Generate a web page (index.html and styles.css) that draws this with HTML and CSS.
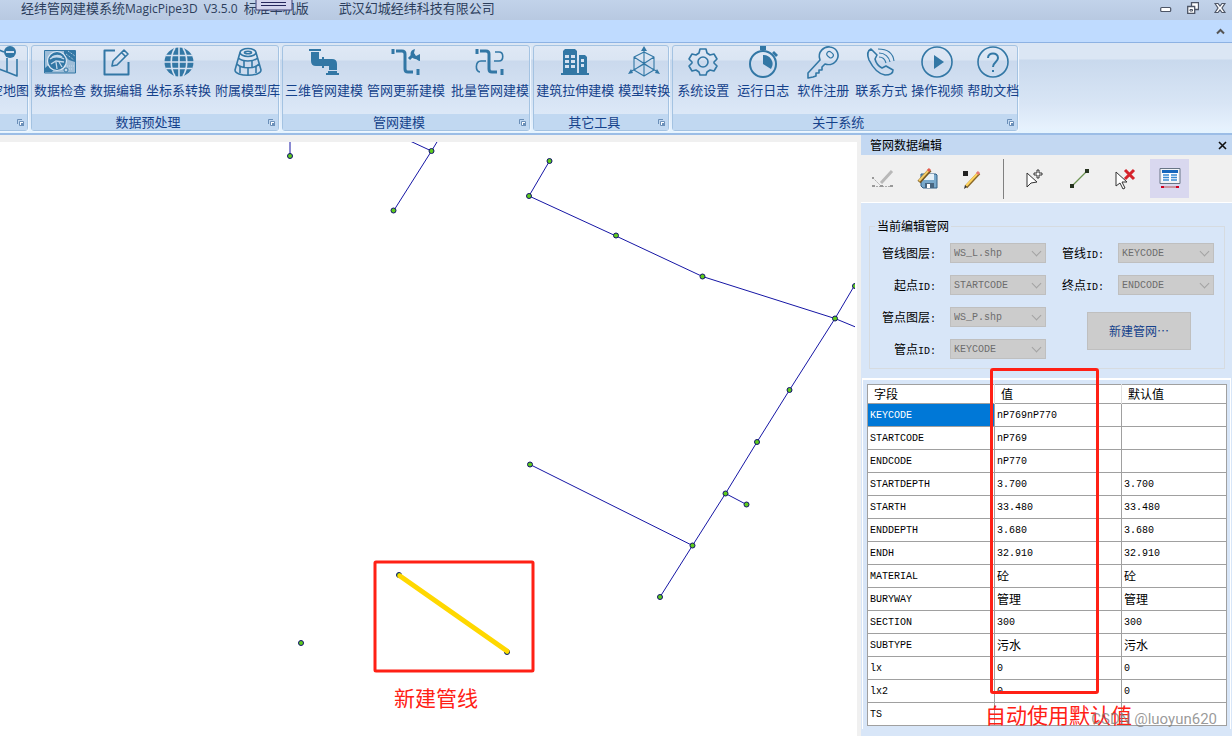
FILE: index.html
```html
<!DOCTYPE html>
<html lang="zh-CN">
<head>
<meta charset="utf-8">
<title>经纬管网建模系统MagicPipe3D</title>
<link rel="stylesheet" href="styles.css">
</head>
<body>
<header class="titlebar">
  <h1 class="title"><span>经纬管网建模系统<span class="latin">MagicPipe3D</span></span><span class="latin">V3.5.0</span><span>标准单机版</span></h1>
  <span class="company">武汉幻城经纬科技有限公司</span>
  <svg class="tab-handle" width="38" height="12" viewBox="0 0 38 12"><path d="M1 -2v12h36v-12" fill="#d4d4ee" stroke="#3c3c70"/><path d="M6 2.500h25M6 5.500h25" stroke="#26265c"/></svg>
  <div class="window-buttons">
    <button aria-label="最小化"><svg width="12" height="12" viewBox="0 0 12 12"><rect x=".7" y="5.500" width="10" height="4" rx="1" fill="#fff" stroke="#4d5566" stroke-width="1.200"/></svg></button>
    <button aria-label="还原"><svg width="12" height="12" viewBox="0 0 12 12"><path d="M4.500.7h7v6.800h-7z" fill="#fff" stroke="#4d5566" stroke-width="1.300"/><path d="M.7 4.500h7v6.800h-7z" fill="#fff" stroke="#4d5566" stroke-width="1.300"/><path d="M3 7.500h2.500v1.500H3z" stroke="#4d5566"/></svg></button>
    <button aria-label="关闭"><svg width="12" height="12" viewBox="0 0 12 12"><path d="M1 1.500h3l2 2.500 2-2.500h3L8 6l3 4.500H8L6 8l-2 2.500H1L4 6z" fill="#fff" stroke="#4d5566" stroke-width="1.200"/></svg></button>
  </div>
</header>
<div class="tabstrip"><button aria-label="折叠功能区"><svg width="9" height="7" viewBox="0 0 9 7"><path d="M1 5.500l3.500-3.500L8 5.500" fill="none" stroke="#555" stroke-width="2"/></svg></button></div>

<nav class="ribbon">
  <section class="group group-cut">
    <div class="tools">
      <button><svg viewBox="0 0 32 32"><path d="M4 7l8-3 5 2M4 7v20l8-4 8 3 10 4V13M20 12v14" class="ln"/><circle cx="23" cy="6" r="6" class="fl"/><path d="M19 6h8" stroke="#d5e1f1" stroke-width="2"/></svg>清空地图</button>
    </div>
    <footer><span></span><svg class="launch" viewBox="0 0 9 9"><path d="M1.500 6V1.500H6" fill="none" stroke="#6b8fb8"/><path d="M3.500 3.500h4v4h-4z" fill="#fff" stroke="#6b8fb8"/><path d="M5 5h3v3H5z" fill="#6b8fb8"/></svg></footer>
  </section>
  <section class="group">
    <div class="tools">
      <button><svg viewBox="0 0 32 32"><path d="M.5 4.500h31v22.500H.5z" fill="#9dbdd8" stroke="#3277a5"/><path d="M20 5h11v11l-6-2-5-5zM1 22l6-5 4 5-3 4H1z" fill="#3277a5"/><path d="M22 8l8 6M24 5l7 5M21 20h9M21 23h8" stroke="#c5d9eb" stroke-dasharray="1 1"/><circle cx="13" cy="15" r="9.500" fill="#3277a5" stroke="#dce8f5" stroke-width="1.200"/><path d="M6 13c3-3 10-3 14 0M7 18l5-3 8 1M12 16l1 7M8 11c3-2 8-2 10 0M15 16l3 5" fill="none" stroke="#c5d9eb" stroke-width="1.300"/><circle cx="22" cy="24" r="2" fill="#c5d9eb" stroke="#3277a5"/></svg>数据检查</button>
      <button><svg viewBox="0 0 32 32"><path d="M15 4.500H4.500v24h24V16" class="ln2"/><path d="M12 20l1-5L24 4l4 4-11 11zM22 7l3 3" class="ln"/></svg>数据编辑</button>
      <button><svg viewBox="0 0 32 32"><circle cx="16" cy="16" r="14.500" class="fl"/><path d="M16 1v30M3 9.500h26M1 16h30M3 22.500h26" stroke="#d5e1f1" stroke-width="1.600"/><path d="M12 2C7 10 7 22 12 30M20 2c5 8 5 20 0 28" fill="none" stroke="#d5e1f1" stroke-width="1.600"/></svg>坐标系转换</button>
      <button><svg viewBox="0 0 32 32"><g class="ln"><ellipse cx="16" cy="6.500" rx="8" ry="4"/><ellipse cx="16" cy="6.500" rx="3.500" ry="1.200"/><path d="M8 6.500L3 24c0 7 26 7 26 0L24 6.500M6.500 12c4 4 15 4 19 0M5 18c4 5 18 5 22 0M12 15v6M20 15v6M8 20v7M16 22v7M24 20v7"/></g></svg>附属模型库</button>
    </div>
    <footer><span>数据预处理</span><svg class="launch" viewBox="0 0 9 9"><path d="M1.500 6V1.500H6" fill="none" stroke="#6b8fb8"/><path d="M3.500 3.500h4v4h-4z" fill="#fff" stroke="#6b8fb8"/><path d="M5 5h3v3H5z" fill="#6b8fb8"/></svg></footer>
  </section>
  <section class="group">
    <div class="tools">
      <button><svg viewBox="0 0 32 32"><path d="M1 3h12v2H1zM3 6h8v7h3v-2h2v2h8q5 0 5 5v6h-8v-4h-5v2h-2v-2h-6q-5 0-5-5zM18 27h13v2H18zM20 25h9v2h-9z" class="fl"/></svg>三维管网建模</button>
      <button><svg viewBox="0 0 32 32"><path d="M3 3v5M6 5h6q3 0 3 3v15q0 3 3 3h5M28 23v6" class="ln4"/><path d="M19 13l5-5" stroke="#3277a5" stroke-width="3"/><path d="M25 3c-6 1-6 9 0 10 2 0 3 2 5 2v-7l-4 2-2-3z" class="fl"/></svg>管网更新建模</button>
      <button class="wide"><svg viewBox="0 0 32 32"><path d="M3 3v5M6 5h6q3 0 3 3v15q0 3 3 3h5M28 23v6" class="ln4"/><path d="M21 6h4c5 0 5 9 0 9h-5M12 15H7c-6 0-6 11-1 11" class="ln"/></svg>批量管网建模</button>
    </div>
    <footer><span>管网建模</span><svg class="launch" viewBox="0 0 9 9"><path d="M1.500 6V1.500H6" fill="none" stroke="#6b8fb8"/><path d="M3.500 3.500h4v4h-4z" fill="#fff" stroke="#6b8fb8"/><path d="M5 5h3v3H5z" fill="#6b8fb8"/></svg></footer>
  </section>
  <section class="group">
    <div class="tools">
      <button><svg viewBox="0 0 32 32"><path d="M2 27h2V5l2-2h10l2 2v22h2V9h6l2 2v16h2v2H2z" class="fl"/><path d="M6 9h4v3H6zM12 9h4v3h-4zM6 14h4v3H6zM12 14h4v3h-4zM6 19h4v3H6zM12 19h4v3h-4zM22 13h3v3h-3zM22 18h3v3h-3z" fill="#d5e1f1"/></svg>建筑拉伸建模</button>
      <button><svg viewBox="0 0 32 32"><path d="M16 4v26M6 11l10-5 10 5v13l-10 6-10-6zM6 24l20-13M6 11l20 13M2 26l14-8 14 8" class="ln1"/><path d="M13 5l3-5 3 5zM0 28l3-5 2 4zM32 28l-3-5-2 4z" class="fl"/></svg>模型转换</button>
    </div>
    <footer><span>其它工具</span><svg class="launch" viewBox="0 0 9 9"><path d="M1.500 6V1.500H6" fill="none" stroke="#6b8fb8"/><path d="M3.500 3.500h4v4h-4z" fill="#fff" stroke="#6b8fb8"/><path d="M5 5h3v3H5z" fill="#6b8fb8"/></svg></footer>
  </section>
  <section class="group">
    <div class="tools">
      <button class="wide"><svg viewBox="0 0 32 32"><path d="M13 3h6l1 4 3 2 4-1 3 5-3 3v1l3 3-3 5-4-1-3 2-1 3h-6l-1-3-3-2-4 1-3-5 3-3v-1l-3-3 3-5 4 1 3-2z" class="ln"/><circle cx="16" cy="16" r="5" class="ln"/></svg>系统设置</button>
      <button class="wide"><svg viewBox="0 0 32 32"><circle cx="16" cy="18" r="13" class="ln2"/><path d="M13 0h6v4h-6zM27 5l4 4-2 2-4-4zM16 9a9 9 0 0 1 8 14l-8-5z" class="fl"/></svg>运行日志</button>
      <button class="wide"><svg viewBox="0 0 32 32"><path d="M13 14C10 6 17 0 23 1c8 1 10 9 6 14-3 4-8 4-11 3l-3 3v3h-3v3H9v3l-3 1-5 1v-5z" class="ln"/><rect x="20" y="6" width="7" height="5" rx="2.500" class="ln1" transform="rotate(40 23 8)"/></svg>软件注册</button>
      <button><svg viewBox="0 0 32 32"><path d="M6 3c-4 2-4 6-2 11 4 8 10 14 16 15 5 0 8-2 8-5l-7-4-4 2c-4-2-6-5-7-9l2-4z" class="ln"/><path d="M14 11c4 0 6 2 7 6M14 7c6 0 10 4 11 9M13 3c9 0 15 4 16 12" class="ln1"/></svg>联系方式</button>
      <button><svg viewBox="0 0 32 32"><circle cx="16" cy="16" r="15" class="ln"/><path d="M13 9l10 7-10 7z" class="fl"/></svg>操作视频</button>
      <button><svg viewBox="0 0 32 32"><circle cx="16" cy="16" r="15" class="ln"/><path d="M11 12c0-6 10-6 10 0 0 4-5 4-5 9M16 24v2" class="ln2"/></svg>帮助文档</button>
    </div>
    <footer><span>关于系统</span><svg class="launch" viewBox="0 0 9 9"><path d="M1.500 6V1.500H6" fill="none" stroke="#6b8fb8"/><path d="M3.500 3.500h4v4h-4z" fill="#fff" stroke="#6b8fb8"/><path d="M5 5h3v3H5z" fill="#6b8fb8"/></svg></footer>
  </section>
</nav>

<main class="workspace">
  <section class="map">
    <svg class="pipes" aria-label="管网地图"><g transform="translate(0 -142)">
      <g class="pipe"><path d="M290 130V156M410 141L431.500 151L440 137M431.500 151L393.500 211M549.500 161L529 196L616 236L702.500 276.500L835 318.500L870 333M866 266L835 318.500L789.500 390L757 442L725.500 493.500L692.500 545.500L660 597M530 464.500L692.500 545.500M725.500 493.500L746.500 504.500"/></g>
      <g class="node"><circle cx="290" cy="156" r="2.500"/><circle cx="431.500" cy="151" r="2.500"/><circle cx="393.500" cy="210.500" r="2.500"/><circle cx="549.500" cy="161" r="2.500"/><circle cx="529" cy="196" r="2.500"/><circle cx="616" cy="235.500" r="2.500"/><circle cx="702.500" cy="276.500" r="2.500"/><circle cx="835" cy="318.500" r="2.500"/><circle cx="855" cy="286" r="2.500"/><circle cx="789.500" cy="390" r="2.500"/><circle cx="757" cy="442" r="2.500"/><circle cx="725.500" cy="493.500" r="2.500"/><circle cx="746.500" cy="504.500" r="2.500"/><circle cx="692.500" cy="545.500" r="2.500"/><circle cx="660" cy="597" r="2.500"/><circle cx="530" cy="464.500" r="2.500"/><circle cx="301" cy="643" r="2.500"/><circle cx="399" cy="575" r="2.500"/><circle cx="507" cy="652" r="2.500"/></g>
      <path d="M400 576L507 651" stroke="#ffd800" stroke-width="5" stroke-linecap="round"/>
      <rect x="375" y="562" width="158" height="109" rx="1" fill="none" stroke="#ff2015" stroke-width="3"/>
      <text x="394" y="706" class="note">新建管线</text>
    </g></svg>
  </section>

  <aside class="panel">
    <header class="panel-head"><h2>管网数据编辑</h2><button aria-label="关闭面板"><svg width="9" height="9" viewBox="0 0 9 9"><path d="M1 1l7 7M8 1L1 8" stroke="#111" stroke-width="1.600"/></svg></button></header>
    <div class="toolbar">
      <button aria-label="编辑线"><svg viewBox="0 0 24 24"><path d="M2 11l8 8M2 19.500h19" stroke="#aaa" stroke-dasharray="2 1"/><path d="M10 16L21 4" stroke="#b8b8b8" stroke-width="3"/><path d="M1 10h2v2H1zM1 18h3v2H1zM9 18h3v2H9zM19 18h3v2h-3z" fill="#999"/></svg></button>
      <button aria-label="保存编辑"><svg viewBox="0 0 24 24"><path d="M5 7h15l1 1v13H7l-2-2z" fill="#79a9cb" stroke="#315f84"/><path d="M8 7h10v6H8z" fill="#e6f1f8"/><path d="M9 16h9v5H9z" fill="#486680"/><path d="M11 17h3v4h-3z" fill="#fff"/><path d="M3 15L14 3" stroke="#75551f" stroke-width="4"/><path d="M3 14L13 3" stroke="#f4cc68" stroke-width="2"/><path d="M12 4l2-2" stroke="#e65b4d" stroke-width="3"/></svg></button>
      <button aria-label="绘制"><svg viewBox="0 0 24 24"><path d="M2 4h5v5H2z" fill="#222"/><path d="M5 20L18 6" stroke="#8a6828" stroke-width="3.400"/><path d="M5 19L17 6" stroke="#ffd45e" stroke-width="2"/><path d="M16 7l2-2" stroke="#e87973" stroke-width="3"/><path d="M3 22l1-4 2 2z" fill="#333"/></svg></button>
      <span class="divider"></span>
      <button aria-label="添加点"><svg viewBox="0 0 24 24"><path d="M4 6v14l4-4 6-1z" fill="#fff" stroke="#333"/><path d="M14 3h2v3h3v2h-3v3h-2V8h-3V6h3z" fill="#fff" stroke="#333"/></svg></button>
      <button aria-label="添加线"><svg viewBox="0 0 24 24"><path d="M4 19L19 4" stroke="#6b9350" stroke-width="1.300"/><path d="M2 17h4v4H2zM17 2h4v4h-4z" fill="#26331f"/></svg></button>
      <button aria-label="删除"><svg viewBox="0 0 24 24"><path d="M3 5v14l4-3 3 6 2-1-3-6h5z" fill="#fff" stroke="#333"/><path d="M12 3l9 9M21 3l-9 9" stroke="#d5232b" stroke-width="3"/></svg></button>
      <button class="active" aria-label="属性"><svg viewBox="0 0 24 24"><path d="M2 1.500h20v15H2z" fill="#f2f4f6" stroke="#687585"/><path d="M4 3h16v3H4z" fill="#1768bc"/><path d="M4 6h16v8H4z" fill="#fff"/><path d="M5 8h6M5 10.500h6M5 13h6M13 8h6M13 10.500h6M13 13h6" stroke="#3a8cd2" stroke-width="1.500"/><path d="M4 20h16" stroke="#b55"/><path d="M3 19h3v2H3zM18 19h3v2h-3z" fill="#d00020"/></svg></button>
    </div>
    <form class="settings">
      <fieldset>
        <legend>当前编辑管网</legend>
        <div class="fields">
          <label for="f1">管线图层<span class="mono">:</span></label><span class="pick"><select id="f1" disabled><option>WS_L.shp</option></select></span>
          <label for="f2">起点<span class="mono">ID:</span></label><span class="pick"><select id="f2" disabled><option>STARTCODE</option></select></span>
          <label for="f3">管点图层<span class="mono">:</span></label><span class="pick"><select id="f3" disabled><option>WS_P.shp</option></select></span>
          <label for="f4">管点<span class="mono">ID:</span></label><span class="pick"><select id="f4" disabled><option>KEYCODE</option></select></span>
        </div>
        <div class="side">
          <div class="fields">
            <label for="f5">管线<span class="mono">ID:</span></label><span class="pick"><select id="f5" disabled><option>KEYCODE</option></select></span>
            <label for="f6">终点<span class="mono">ID:</span></label><span class="pick"><select id="f6" disabled><option>ENDCODE</option></select></span>
          </div>
          <button type="button" class="new-net">新建管网⋯</button>
        </div>
      </fieldset>
    </form>
    <div class="grid-frame">
      <table>
        <thead><tr><th>字段</th><th>值</th><th>默认值</th></tr></thead>
        <tbody>
          <tr><td class="selected">KEYCODE</td><td>nP769nP770</td><td></td></tr>
          <tr><td>STARTCODE</td><td>nP769</td><td></td></tr>
          <tr><td>ENDCODE</td><td>nP770</td><td></td></tr>
          <tr><td>STARTDEPTH</td><td>3.700</td><td>3.700</td></tr>
          <tr><td>STARTH</td><td>33.480</td><td>33.480</td></tr>
          <tr><td>ENDDEPTH</td><td>3.680</td><td>3.680</td></tr>
          <tr><td>ENDH</td><td>32.910</td><td>32.910</td></tr>
          <tr><td>MATERIAL</td><td class="zh">砼</td><td class="zh">砼</td></tr>
          <tr><td>BURYWAY</td><td class="zh">管理</td><td class="zh">管理</td></tr>
          <tr><td>SECTION</td><td>300</td><td>300</td></tr>
          <tr><td>SUBTYPE</td><td class="zh">污水</td><td class="zh">污水</td></tr>
          <tr><td>lx</td><td>0</td><td>0</td></tr>
          <tr><td>lx2</td><td>0</td><td>0</td></tr>
          <tr><td>TS</td><td></td><td></td></tr>
        </tbody>
      </table>
    </div>
    <div class="callout"></div>
    <span class="callout-text">自动使用默认值</span>
    <span class="watermark">CSDN @luoyun620</span>
  </aside>
</main>
</body>
</html>
```
FILE: styles.css
```css
* { box-sizing: border-box; }
body {
  margin: 0;
  height: 100vh;
  display: flex;
  flex-direction: column;
  overflow: hidden;
  background: #f0f0f0;
  font: 13px/18px "Noto Sans CJK SC", sans-serif;
  color: #000;
}
button { border: 0; background: none; padding: 0; font: inherit; color: inherit; }
svg { display: block; fill: none; }

.titlebar {
  position: relative;
  display: flex;
  align-items: center;
  height: 20px;
  flex: none;
  padding: 0 6px 4px 21px;
  background: linear-gradient(#c2d3ea, #b8c9e1);
  color: #2c3e5c;
}
.title { display: flex; align-items: baseline; gap: 6px; margin: 0; font: inherit; }
.latin { font-family: "Open Sans", sans-serif; font-size: 12px; line-height: 12px; }
.company { margin-left: 30px; }
.tab-handle { position: absolute; left: 255px; top: 0; }
.window-buttons { display: flex; gap: 15px; margin-left: auto; }

.tabstrip {
  display: flex;
  justify-content: flex-end;
  align-items: center;
  height: 23px;
  flex: none;
  padding-right: 7px;
  background: #bfdbff;
  border-bottom: 1px solid #8db2e3;
}

.ribbon {
  display: flex;
  gap: 3px;
  flex: none;
  height: 92px;
  padding: 2px 0;
  background: linear-gradient(#dbe6f4 0, #dbe6f4 16px, #c9d9ed 17px, #d8e5f5 60px, #e6f1fd 85px, #e3f4ff);
  border-bottom: 2px solid #9bbde6;
}
.group {
  flex: none;
  display: flex;
  flex-direction: column;
  border: 1px solid #a4c3e2;
  border-radius: 3px;
  box-shadow: 1px 1px 0 #eff6fe;
  background: linear-gradient(#dfe8f5 0, #dae5f3 14px, #cad9ed 15px, #dce8f7 68px);
}
.group-cut { margin-left: -26px; }
.tools { display: flex; gap: 4px; flex: 1; padding-left: 2px; margin-right: -2px; }
.tools button {
  display: flex;
  flex-direction: column;
  align-items: center;
  gap: 3px;
  color: #15428b;
  white-space: nowrap;
}
.tools .wide { padding: 0 2px; }
.tools svg { width: 32px; height: 32px; overflow: visible; }
.group footer {
  display: grid;
  grid-template-columns: 1fr 14px;
  align-items: center;
  height: 16px;
  background: #c1d8f1;
  color: #15428b;
  text-align: center;
}
.group footer span { line-height: 16px; }
.launch { width: 9px; height: 9px; margin-left: 3px; }
.fl { fill: #3277a5; }
.ln, .ln1, .ln2, .ln4 { fill: none; stroke: #3277a5; stroke-width: 1.6; stroke-linejoin: round; }
.ln1 { stroke-width: 1.1; }
.ln2 { stroke-width: 2; }
.ln4 { stroke-width: 3; stroke-linejoin: miter; }

.workspace { display: flex; flex: 1; min-height: 0; }
.map { flex: 1; min-width: 0; margin: 7px 4px 0 0; padding-right: 2px; background: #fff; }
.pipes { width: 100%; height: 100%; overflow: hidden; }
.pipe { fill: none; stroke: #1616a5; stroke-width: 1; }
.node { fill: #5ecb1c; stroke: #10106e; stroke-width: 1; }
.note { fill: #ff2015; font-size: 21px; }

.panel { position: relative; flex: 0 0 371px; display: flex; flex-direction: column; background: #d8e6f8; }
.panel-head {
  display: flex;
  align-items: center;
  justify-content: space-between;
  flex: none;
  height: 20px;
  padding: 0 5px 0 9px;
  background: #c3d8f2;
}
.panel-head h2 { margin: 0; font-size: 12px; font-weight: 400; }
.toolbar {
  display: flex;
  align-items: center;
  gap: 6px;
  flex: none;
  height: 48px;
  padding-left: 2px;
  background: #f0f0f0;
  border-bottom: 1px solid #fff;
}
.toolbar button { display: grid; place-items: center; width: 39px; height: 39px; }
.toolbar .active { background: #d9d8ef; }
.toolbar svg { width: 24px; height: 24px; }
.divider { width: 1px; height: 40px; margin: 0 5px; background: #808080; }

.settings { padding: 14px 7px 9px 8px; font-size: 12px; }
fieldset {
  display: flex;
  gap: 16px;
  margin: 0;
  padding: 8px 10px 9px 0;
  border: 1px solid #d6dbe0;
}
legend { margin-left: 5px; padding: 0 2px; }
.mono { font: 10px/10px "Liberation Mono", monospace; }
.fields { display: grid; grid-template-columns: 68px 96px; gap: 12px; align-items: center; }
.fields label { height: 20px; padding-right: 2px; text-align: right; line-height: 20px; white-space: nowrap; }
.side { display: flex; flex-direction: column; gap: 17px; }
.side .fields { grid-template-columns: 44px 96px; }
.pick { position: relative; height: 20px; }
.pick::after {
  content: "";
  position: absolute;
  right: 6px;
  top: 5px;
  width: 6px;
  height: 6px;
  border: solid #a3a3a3;
  border-width: 0 1px 1px 0;
  transform: rotate(45deg);
}
.pick select {
  appearance: none;
  display: block;
  width: 100%;
  height: 20px;
  padding: 2px 3px 0;
  border: 1px solid #bfbfbf;
  border-radius: 0;
  background: #ccc;
  color: #6d6d6d;
  opacity: 1;
  font: 10px/16px "Liberation Mono", monospace;
}
.new-net {
  width: 104px;
  height: 38px;
  margin-left: 25px;
  border: 1px solid #bfbfbf;
  background: #ccc;
  color: #15428b;
}

.grid-frame { padding: 4px 3px 3px 4px; margin: 0 1px; border: 1px solid #fff; border-width: 2px 1px 0; }
table { width: 100%; border-collapse: collapse; table-layout: fixed; background: #fff; border: 1px solid #a0a0a0; }
th, td { padding: 0 2px; border: 1px solid #a0a0a0; text-align: left; font-weight: 400; }
th { height: 19px; padding: 0 6px; font-size: 12px; line-height: 18px; border-width: 0; }
th:first-child, th:nth-child(2) { width: 127px; }
th + th { border-left: 1px solid #e0e0e0; }
td { height: 23px; padding-top: 2px; font: 10px/20px "Liberation Mono", monospace; }
td.zh { padding-top: 0; font: 12px/22px "Noto Sans CJK SC", sans-serif; }
td.selected { background: #0078d7; color: #fff; }

.callout {
  position: absolute;
  left: 129px;
  top: 233px;
  width: 109px;
  height: 326px;
  border: 3px solid #ff2015;
  border-radius: 3px;
}
.callout-text {
  position: absolute;
  left: 124px;
  top: 567px;
  font-size: 21px;
  line-height: 24px;
  color: #ff2015;
  white-space: nowrap;
}
.watermark {
  position: absolute;
  right: 15px;
  top: 575px;
  font: 15px/18px Roboto, sans-serif;
  color: rgba(120, 120, 120, .75);
}
```
